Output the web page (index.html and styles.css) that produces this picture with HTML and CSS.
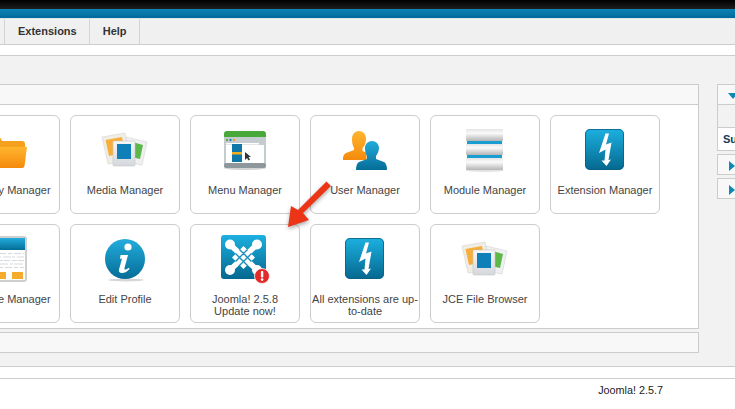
FILE: index.html
```html
<!DOCTYPE html>
<html lang="en">
<head>
<meta charset="utf-8">
<title>Joomla! Control Panel</title>
<link rel="stylesheet" href="styles.css">
</head>
<body>
<svg class="defs" width="0" height="0" aria-hidden="true">
  <defs>
    <linearGradient id="tile" x1="0" y1="0" x2="0" y2="1"><stop offset="0" stop-color="#1cb0e0"/><stop offset="1" stop-color="#05688f"/></linearGradient>
    <linearGradient id="orange" x1="0" y1="0" x2="0" y2="1"><stop offset="0" stop-color="#ffb52e"/><stop offset="1" stop-color="#f58a0c"/></linearGradient>
    <linearGradient id="slab" x1="0" y1="0" x2="0" y2="1"><stop offset="0" stop-color="#e4e4e4"/><stop offset=".35" stop-color="#fafafa"/><stop offset="1" stop-color="#b4b4b4"/></linearGradient>
    <linearGradient id="photo" x1="0" y1="0" x2="0" y2="1"><stop offset="0" stop-color="#f6f6f6"/><stop offset="1" stop-color="#d4d8dc"/></linearGradient>
    <linearGradient id="ball" x1="0" y1="0" x2="0" y2="1"><stop offset="0" stop-color="#23acdc"/><stop offset="1" stop-color="#046d97"/></linearGradient>
    <symbol id="media" viewBox="0 0 48 48">
      <path d="M1 12 24 8 29 36 7 39Z" fill="#f0ede4" stroke="#d4d4d4" stroke-width=".6"/>
      <path d="M4.500 15 21 12 24 28 8 31Z" fill="#f7ae3a"/>
      <path d="M25 12 46 17 41 40 31 38Z" fill="#f0f0f0" stroke="#d4d4d4" stroke-width=".6"/>
      <path d="M28 16 42 20 39 34 30 32Z" fill="#5cb848"/>
      <rect x="12" y="16" width="22" height="25" rx="1" fill="url(#photo)" stroke="#c8c8c8" stroke-width=".6"/>
      <rect x="16" y="19" width="14" height="15" fill="#0f7fb8"/>
    </symbol>
    <symbol id="bolt" viewBox="0 0 48 48">
      <rect x="4" y="4" width="39" height="41" rx="5" fill="url(#tile)"/>
      <rect x="4.500" y="4.500" width="38" height="40" rx="4.500" fill="none" stroke="#0b5f82" stroke-width=".8"/>
      <path d="M24.500 8.500H28L25 19.500 30.500 17.500 27.500 35 30 34.500 25.500 41 20.500 35.500H23.500L24.500 24.500 18 28Z" fill="#fff"/>
    </symbol>
  </defs>
</svg>

<div class="topbar"></div>
<div class="bluebar"></div>
<nav class="menu">
  <span class="menu-item">Extensions</span>
  <span class="menu-item">Help</span>
</nav>
<div class="spacer"></div>

<div class="workspace">
  <main class="content">
    <section class="panel">
      <div class="panel-head"></div>
      <div class="grid">
        <a class="card">
          <svg class="icon" viewBox="0 0 48 48"><path d="M3 15q0-3 3-3H17q2 0 3 2l1 2H41q3 0 3 3v3H3Z" fill="#f6a11d"/><path d="M2 22H46L43.500 41q-.3 2-2.500 2H6q-2 0-2.500-2Z" fill="url(#orange)"/></svg>
          <span class="label">Category Manager</span>
        </a>
        <a class="card">
          <svg class="icon"><use href="#media"/></svg>
          <span class="label">Media Manager</span>
        </a>
        <a class="card">
          <svg class="icon" viewBox="0 0 48 48">
            <ellipse cx="24" cy="43" rx="21" ry="2" fill="#d4d4d4"/>
            <path d="M3 9q0-3 3-3H42q3 0 3 3v3H3Z" fill="#48a83a"/>
            <rect x="3" y="12" width="42" height="30" fill="#c4ccd0"/>
            <rect x="3" y="38" width="42" height="5" rx="2" fill="#8d979c"/>
            <rect x="5" y="20" width="38" height="18" fill="#fff"/>
            <circle cx="6" cy="15" r="1.200" fill="#6aae3a"/><circle cx="9.500" cy="15" r="1.200" fill="#1e88c0"/><circle cx="13" cy="15" r="1.200" fill="#f0a020"/>
            <rect x="5" y="18" width="33" height="1.500" fill="#fff"/>
            <rect x="11" y="19" width="10" height="18" fill="#0f78a8"/><rect x="11" y="27" width="10" height="2.500" fill="#eeb022"/>
            <path d="M24 27v8l2-2 1.500 2.500 1.500-1-1.500-2.500h2.500Z" fill="#333"/>
          </svg>
          <span class="label">Menu Manager</span>
        </a>
        <a class="card">
          <svg class="icon" viewBox="0 0 48 48">
            <path d="M11 14c0-5 3-8 7-8s7 3 7 8c0 4-1.500 7-3.500 9v3c2 .5 4 1.500 4 3v6H2c-.5-3 1-6 3-7l8-3v-2c-1.300-2-2-5-2-9Z" fill="url(#orange)"/>
            <path d="M24 23c0-4 3-7 7-7s7 3 7 7c0 3-1.500 6-3 8v3l8 3c2 1 3 4 3 8H15c0-4 1-7 3-8l8-3v-3c-1.500-2-2-5-2-8Z" fill="url(#ball)"/>
          </svg>
          <span class="label">User Manager</span>
        </a>
        <a class="card">
          <svg class="icon" viewBox="0 0 48 48">
            <ellipse cx="24" cy="45.500" rx="19" ry="1.500" fill="#e2e2e2"/>
            <rect x="5" y="4" width="37" height="12" rx="1" fill="url(#slab)"/>
            <rect x="6" y="16" width="35" height="3" fill="#1a9dd0"/>
            <rect x="5" y="19" width="37" height="11" rx="1" fill="url(#slab)"/>
            <rect x="6" y="30" width="35" height="3" fill="#1a9dd0"/>
            <rect x="5" y="33" width="37" height="12" rx="1" fill="url(#slab)"/>
          </svg>
          <span class="label">Module Manager</span>
        </a>
        <a class="card">
          <svg class="icon"><use href="#bolt"/></svg>
          <span class="label">Extension Manager</span>
        </a>
        <a class="card">
          <svg class="icon" viewBox="0 0 48 48">
            <rect x="0" y="2" width="46" height="46" rx="3" fill="#cfcfcf"/>
            <rect x="2" y="4" width="42" height="42" fill="#fff"/>
            <rect x="2" y="4" width="42" height="12" fill="url(#ball)"/>
            <g stroke="#c4c8cc" stroke-width=".7">
              <path d="M3 19.500H43" stroke-dasharray="7 2 4 2"/>
              <path d="M3 23H43" stroke-dasharray="3 2 8 1"/>
              <path d="M3 26.500H43" stroke-dasharray="5 1 6 2"/>
              <path d="M3 30H43" stroke-dasharray="9 2 3 1"/>
              <path d="M3 33.500H43" stroke-dasharray="4 2 7 2"/>
            </g>
            <rect x="3" y="38" width="22" height="7" fill="#f7ab2c"/><rect x="31" y="38" width="11" height="7" fill="#f7ab2c"/>
          </svg>
          <span class="label">Template Manager</span>
        </a>
        <a class="card">
          <svg class="icon" viewBox="0 0 48 48">
            <ellipse cx="25" cy="46" rx="18" ry="1.500" fill="#d6d6d6"/>
            <circle cx="24" cy="25" r="20" fill="url(#ball)"/>
            <circle cx="27" cy="13" r="3.600" fill="#fff"/>
            <path d="M19.500 21h7.500l-3.500 13q-.4 2 1.500 1.500l3-1.700.5 1.200c-3 3-5 4-7.500 4-2.700 0-3.500-1.500-3-3.500l3-11-2 .5Z" fill="#fff"/>
          </svg>
          <span class="label">Edit Profile</span>
        </a>
        <a class="card">
          <svg class="icon" viewBox="0 0 48 48">
            <rect x="0" y="1" width="45" height="44" rx="3" fill="url(#tile)"/>
            <path d="M9 10.500 36 36M36 10.500 9 36" fill="none" stroke="#fff" stroke-width="5.500" stroke-linecap="round"/>
            <path d="M22.500 12 34 23.500 22.500 35 11 23.500Z" fill="#fff"/>
            <path d="M14.500 19.500 26.500 31.500M18.500 15.500 30.500 27.500M14.500 27.500 26.500 15.500M18.500 31.500 30.500 19.500" fill="none" stroke="#1a8fbc" stroke-width="1.400"/>
            <g fill="#fff"><circle cx="9" cy="10.500" r="5"/><circle cx="36" cy="10.500" r="5"/><circle cx="9" cy="36" r="5"/><circle cx="36" cy="36" r="5"/></g>
            <circle cx="41" cy="42" r="7.500" fill="#e22a2a" stroke="#fff" stroke-width=".8"/>
            <rect x="39.900" y="37" width="2.400" height="6.500" rx="1" fill="#fff"/><circle cx="41.100" cy="45.600" r="1.300" fill="#fff"/>
          </svg>
          <span class="label">Joomla! 2.5.8<br>Update now!</span>
        </a>
        <a class="card">
          <svg class="icon"><use href="#bolt"/></svg>
          <span class="label">All extensions are up-to-date</span>
        </a>
        <a class="card">
          <svg class="icon"><use href="#media"/></svg>
          <span class="label">JCE File Browser</span>
        </a>
      </div>
    </section>
    <section class="panel panel-bar"></section>
  </main>

  <aside class="sidebar">
    <div class="side-box">
      <div class="side-head"><span class="tri-down"></span></div>
      <div class="side-tools"></div>
      <div class="side-title">Summary</div>
    </div>
    <div class="side-box side-closed"><span class="tri-right"></span></div>
    <div class="side-box side-closed"><span class="tri-right"></span></div>
  </aside>
</div>

<div class="subfoot"></div>
<footer class="footer">Joomla! 2.5.7</footer>

<svg class="arrow" width="60" height="60" viewBox="0 0 60 60" aria-hidden="true">
  <path d="M44.500 1.500 49 6 21 33 27 40 6 47 9 26 16 30Z" fill="#ec3517"/>
</svg>
</body>
</html>
```
FILE: styles.css
```css
* { box-sizing: border-box; }
html, body { margin: 0; padding: 0; }
body {
  width: 735px;
  height: 409px;
  overflow: hidden;
  position: relative;
  background: #fff;
  font-family: "Liberation Sans", Arial, sans-serif;
  color: #444;
}
.defs { position: absolute; }
.topbar { height: 9px; background: linear-gradient(#000, #1e1e1e); }
.bluebar { height: 9px; background: linear-gradient(#0c84b6, #00699a); }
.menu {
  display: flex;
  height: 27px;
  padding-left: 4px;
  background: #f0f0f0;
  border-top: 1px solid #dfe6ea;
  border-bottom: 1px solid #ccc;
}
.menu-item {
  padding: 0 12px 0 13px;
  border-right: 1px solid #d4d4d4;
  font-size: 11px;
  font-weight: bold;
  line-height: 24px;
  color: #333;
}
.menu-item:first-child { border-left: 1px solid #d4d4d4; }
.spacer { height: 10px; background: #fff; }
.workspace {
  display: flex;
  height: 312px;
  padding-top: 28px;
  background: #f2f2f2;
  border-top: 1px solid #ccc;
  border-bottom: 1px solid #ccc;
}
.content { flex: none; width: 699px; }
.panel { border: 1px solid #ccc; border-left: 0; background: #fff; }
.panel-head { height: 20px; background: #f8f8f8; border-bottom: 1px solid #ccc; }
.grid {
  display: grid;
  grid-template-columns: repeat(6, 110px);
  grid-auto-rows: 99px;
  gap: 10px;
  margin-left: -50px;
  padding: 10px 0 5px;
}
.card {
  display: block;
  padding: 9px 0 0;
  background: #fff;
  border: 1px solid #ccc;
  border-radius: 6px;
  text-align: center;
}
.icon { display: block; width: 48px; height: 48px; margin: 0 auto 11px; overflow: visible; }
.label { display: block; font-size: 11px; line-height: 12px; color: #444; }
.panel-bar { height: 21px; margin-top: 3px; background: #f8f8f8; }
.sidebar { flex: none; width: 100px; margin-left: 18px; }
.side-box { background: #fff; border: 1px solid #ccc; margin-bottom: 3px; }
.side-head { height: 20px; padding: 8px 0 0 10px; background: #f8f8f8; border-bottom: 1px solid #ccc; }
.side-tools { height: 23px; background: #f2f2f2; border-bottom: 1px solid #ccc; }
.side-title { height: 22px; padding-left: 5px; font-size: 11px; font-weight: bold; line-height: 23px; color: #123a5a; }
.side-closed { height: 21px; padding: 6px 0 0 11px; background: #f8f8f8; }
.tri-down, .tri-right { display: block; width: 0; height: 0; }
.tri-down { border-top: 6px solid #1188b4; border-left: 5px solid transparent; border-right: 5px solid transparent; }
.tri-right { border-left: 6px solid #1188b4; border-top: 5px solid transparent; border-bottom: 5px solid transparent; }
.subfoot { height: 12px; background: #fff; border-bottom: 1px solid #ccc; }
.footer { padding: 5px 72px 0 0; font-size: 10.8px; line-height: 12px; text-align: right; color: #222; }
.arrow {
  position: absolute;
  left: 282px;
  top: 180px;
  overflow: visible;
  filter: drop-shadow(0 2px 2px rgba(0, 0, 0, .35));
}
```
